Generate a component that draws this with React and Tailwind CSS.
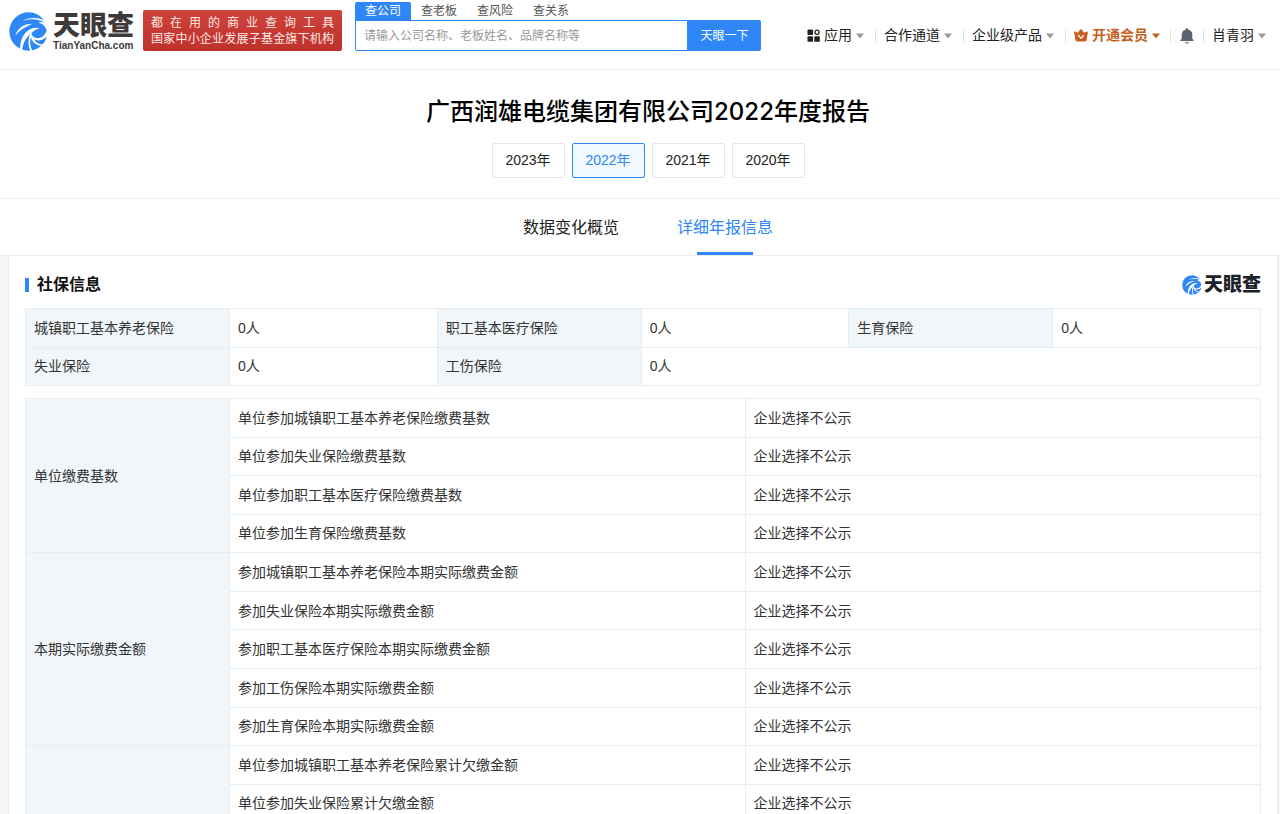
const NOT_PUBLIC = '企业选择不公示';

const years = ['2023年', '2022年', '2021年', '2020年'];
const searchTabs = ['查公司', '查老板', '查风险', '查关系'];

const insured = [
  [
    ['城镇职工基本养老保险', '0人'],
    ['职工基本医疗保险', '0人'],
    ['生育保险', '0人'],
  ],
  [
    ['失业保险', '0人'],
    ['工伤保险', '0人'],
  ],
];

const groups = [
  {
    label: '单位缴费基数',
    rows: [
      '单位参加城镇职工基本养老保险缴费基数',
      '单位参加失业保险缴费基数',
      '单位参加职工基本医疗保险缴费基数',
      '单位参加生育保险缴费基数',
    ],
  },
  {
    label: '本期实际缴费金额',
    rows: [
      '参加城镇职工基本养老保险本期实际缴费金额',
      '参加失业保险本期实际缴费金额',
      '参加职工基本医疗保险本期实际缴费金额',
      '参加工伤保险本期实际缴费金额',
      '参加生育保险本期实际缴费金额',
    ],
  },
  {
    label: '单位累计欠缴金额',
    rows: [
      '单位参加城镇职工基本养老保险累计欠缴金额',
      '单位参加失业保险累计欠缴金额',
      '单位参加职工基本医疗保险累计欠缴金额',
      '单位参加工伤保险累计欠缴金额',
      '单位参加生育保险累计欠缴金额',
    ],
  },
];

function Swirl({ className }) {
  return (
    <svg viewBox="0 0 116 116" className={className} aria-hidden="true">
      <circle cx="58" cy="58" r="57" fill="#2f86f6" />
      <path d="M40 27C60 15 88 14 112 28L118 34L118 56L112 56C111 46 103 36 88 31C94 29 101 29 107 32C90 20 64 18 40 27Z" fill="#fff" />
      <path d="M19 70C26 46 46 34 72 35C64 37 58 40 53 43C40 49 29 57 19 70Z" fill="#fff" />
      <path d="M33 110C33 84 43 60 66 50C74 46 84 46 91 49C80 51 72 56 68 62C53 74 42 89 39 113Z" fill="#fff" />
      <path d="M67 59C65 68 71 76 83 78C95 79 106 72 112 56L118 56L118 76L109 76C100 85 85 87 75 81C80 92 91 97 102 96L98 100C82 101 70 91 65 76C61 88 63 103 70 116L64 116C55 98 56 76 67 59Z" fill="#fff" />
    </svg>
  );
}

function Caret({ className }) {
  return (
    <svg viewBox="0 0 8 6" className={`ml-1 h-[6px] w-2 shrink-0 ${className}`} aria-hidden="true">
      <path d="M0 .5h8L4 5.5z" fill="currentColor" />
    </svg>
  );
}

function AppsIcon() {
  return (
    <svg viewBox="0 0 14 14" className="mr-1 size-[13px] shrink-0" aria-hidden="true">
      <rect x="0.5" y="0.5" width="6" height="6" rx="1" fill="#222" />
      <rect x="0.5" y="7.8" width="6" height="6" rx="1" fill="#222" />
      <rect x="7.8" y="7.8" width="6" height="6" rx="1" fill="#222" />
      <circle cx="10.8" cy="3.5" r="2.2" fill="none" stroke="#222" strokeWidth="1.4" />
    </svg>
  );
}

function CrownIcon() {
  return (
    <svg viewBox="0 0 14 13" className="mr-1 h-[13px] w-[14px] shrink-0" aria-hidden="true">
      <path
        d="M1 2.6L3.800 3.800L6.300 .6Q7 -.1 7.700 .6L10.200 3.800L13 2.600Q14 2.400 13.800 3.400L12.600 11Q12.400 12.400 11.200 12.400H2.800Q1.600 12.400 1.400 11L.2 3.400Q0 2.400 1 2.600Z"
        fill="#c55f1d"
      />
      <path d="M4.400 6.400L7 9.200L9.600 6.400" fill="none" stroke="#fff" strokeWidth="1.300" strokeLinecap="round" strokeLinejoin="round" />
    </svg>
  );
}

function BellIcon() {
  return (
    <svg viewBox="0 0 14 16" className="h-4 w-[14px]" aria-hidden="true">
      <path
        d="M7 .2C7.700 .2 8.100 .7 8.100 1.400C10.600 1.900 12.300 3.900 12.300 6.400V10.800L13.600 12V12.900H.4V12L1.700 10.800V6.400C1.700 3.900 3.400 1.900 5.900 1.400C5.900 .7 6.300 .2 7 .2Z"
        fill="#5a6370"
      />
      <path d="M4.800 14.200H9.200Q8.800 15.500 7 15.500T4.800 14.200Z" fill="#5a6370" />
    </svg>
  );
}

function Divider() {
  return <span className="h-3 w-px bg-[#e2e2e2]" />;
}

function Header() {
  return (
    <header className="flex h-[70px] items-start border-b border-[#ececec] bg-white pr-[14px] pl-[9px]">
      <a href="#home" className="flex h-[62px] items-center">
        <Swirl className="size-[39px]" />
        <span className="ml-[5px] flex flex-col text-[#3e3a39]">
          <span className="text-[27px] leading-[28px] font-black">天眼查</span>
          <span className="text-[10px] leading-[11px] font-bold">TianYanCha.com</span>
        </span>
      </a>
      <div className="mt-[10px] ml-[9px] flex h-[41px] w-[199px] flex-col justify-center rounded-[2px] bg-linear-to-b from-[#cd433b] to-[#bf302b] px-2 text-[12px] leading-[16px] text-[#ffeae6]">
        <p className="[text-align-last:justify]">都 在 用 的 商 业 查 询 工 具</p>
        <p className="[text-align-last:justify]">国家中小企业发展子基金旗下机构</p>
      </div>
      <form className="mt-[2px] ml-[13px] w-[406px]">
        <div className="flex text-[12px] leading-[18px] text-[#555]">
          {searchTabs.map((tab, i) => (
            <button
              key={tab}
              type="button"
              className={i === 0 ? 'w-14 rounded-t-[2px] bg-[#2f86f6] text-white' : 'w-14'}
            >
              {tab}
            </button>
          ))}
        </div>
        <div className="flex h-[31px]">
          <input
            type="text"
            aria-label="搜索"
            placeholder="请输入公司名称、老板姓名、品牌名称等"
            className="min-w-0 flex-1 rounded-bl-[2px] border border-[#2f86f6] px-2 text-[12px] outline-none placeholder:text-[#999]"
          />
          <button type="submit" className="w-[73px] rounded-r-[2px] bg-[#2f86f6] text-[12px] text-white">
            天眼一下
          </button>
        </div>
      </form>
      <nav className="ml-auto flex h-[71px] items-center text-[14px] whitespace-nowrap text-[#222]">
        <button type="button" className="flex items-center pr-[11px]">
          <AppsIcon />
          应用
          <Caret className="text-[#999]" />
        </button>
        <Divider />
        <button type="button" className="flex items-center pr-[11px] pl-2">
          合作通道
          <Caret className="text-[#999]" />
        </button>
        <Divider />
        <button type="button" className="flex items-center pr-[11px] pl-2">
          企业级产品
          <Caret className="text-[#999]" />
        </button>
        <Divider />
        <button type="button" className="flex items-center pr-[10px] pl-2 font-bold text-[#c55f1d]">
          <CrownIcon />
          开通会员
          <Caret className="text-[#c55f1d]" />
        </button>
        <Divider />
        <button type="button" aria-label="消息" className="px-[9px]">
          <BellIcon />
        </button>
        <Divider />
        <button type="button" className="flex items-center pl-2">
          肖青羽
          <Caret className="text-[#999]" />
        </button>
      </nav>
    </header>
  );
}

const labelCell = 'border border-[#e6eef3] bg-[#f1f6fa] px-2 text-left font-normal';
const valueCell = 'border border-[#e6eef3] px-2';

function InsuredTable() {
  return (
    <table className="h-[78px] w-full table-fixed border-collapse">
      <colgroup>
        <col className="w-[204px]" />
        <col />
        <col className="w-[204px]" />
        <col />
        <col className="w-[204px]" />
        <col />
      </colgroup>
      <tbody>
        {insured.map((row, i) => (
          <tr key={i}>
            {row.flatMap(([label, value], j) => [
              <th key={label} scope="row" className={labelCell}>
                {label}
              </th>,
              <td key={label + value} colSpan={j === row.length - 1 && row.length < 3 ? 3 : 1} className={valueCell}>
                {value}
              </td>,
            ])}
          </tr>
        ))}
      </tbody>
    </table>
  );
}

function PaymentTable() {
  return (
    <table className="mt-3 h-[541px] w-full table-fixed border-collapse">
      <colgroup>
        <col className="w-[204px]" />
        <col />
        <col />
      </colgroup>
      <tbody>
        {groups.flatMap((group) =>
          group.rows.map((name, i) => (
            <tr key={name}>
              {i === 0 && (
                <th scope="rowgroup" rowSpan={group.rows.length} className={labelCell}>
                  {group.label}
                </th>
              )}
              <td className={valueCell}>{name}</td>
              <td className={valueCell}>{NOT_PUBLIC}</td>
            </tr>
          )),
        )}
      </tbody>
    </table>
  );
}

export default function App() {
  return (
    <div className="min-h-screen bg-[#f5f5f5] font-['Liberation_Sans','Noto_Sans_CJK_SC',sans-serif] text-[#333]">
      <Header />
      <section className="flex flex-col items-center border-b border-[#ececec] bg-white pt-6 pb-5 pl-4">
        <h1 className="font-['Inter','Noto_Sans_CJK_SC',sans-serif] text-[24px] leading-[36px] font-medium text-black">
          广西润雄电缆集团有限公司2022年度报告
        </h1>
        <div className="mt-[13px] flex gap-[7px] text-[14px]">
          {years.map((year) => (
            <button
              key={year}
              type="button"
              className={
                year === '2022年'
                  ? 'h-[35px] w-[73px] rounded-[2px] border border-[#2f86f6] bg-[#f1f8ff] text-[#2f86f6]'
                  : 'h-[35px] w-[73px] rounded-[2px] border border-[#e5e5e5] bg-white text-[#222]'
              }
            >
              {year}
            </button>
          ))}
        </div>
      </section>
      <nav className="flex h-[57px] justify-center gap-[58px] border-b border-[#ececec] bg-white pl-4 text-[16px]">
        <a href="#overview" className="flex items-center pt-[2px] text-[#222]">
          数据变化概览
        </a>
        <a href="#detail" className="relative flex items-center pt-[2px] text-[#2f86f6]">
          详细年报信息
          <span className="absolute inset-x-5 bottom-0 h-[3px] bg-[#2f86f6]" />
        </a>
      </nav>
      <main className="mr-[2px] ml-2 border-x border-[#ececec] bg-white px-4 pb-6">
        <div className="flex h-[52px] items-center justify-between pt-[5px]">
          <h2 className="flex items-center text-[16px] font-bold text-[#111]">
            <span className="mr-2 h-[14px] w-1 bg-[#2f86f6]" />
            社保信息
          </h2>
          <span className="flex items-center text-[#1d2129]">
            <Swirl className="mr-[2px] size-5" />
            <span className="text-[19px] leading-5 font-black">天眼查</span>
          </span>
        </div>
        <div className="text-[14px] leading-5">
          <InsuredTable />
          <PaymentTable />
        </div>
      </main>
    </div>
  );
}
